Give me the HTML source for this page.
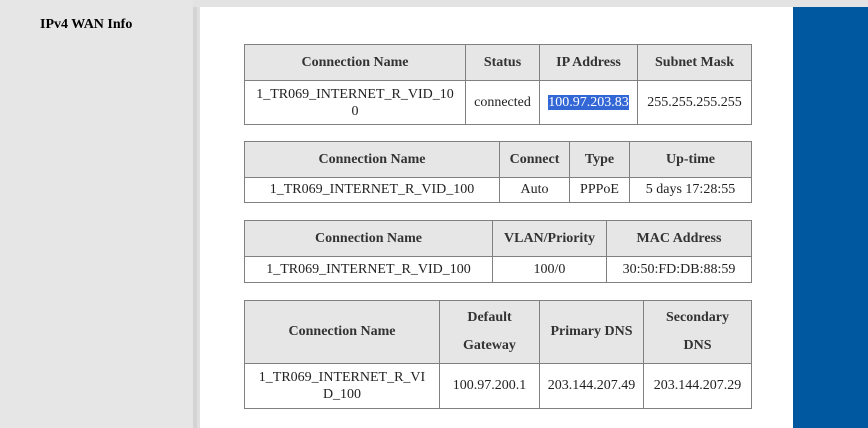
<!DOCTYPE html>
<html><head><style>
body{margin:0;width:868px;height:428px;overflow:hidden;background:#e6e6e6;font-family:"Liberation Serif","Times New Roman",Times,"DejaVu Serif",serif;position:relative}
.side{position:absolute;left:0;top:0;width:193px;height:428px;background:#e6e6e6}
.sep1{position:absolute;left:193px;top:0;width:4px;height:428px;background:#d4d4d4}
.sep2{position:absolute;left:197px;top:0;width:3px;height:428px;background:#e0e0e0}
.topb{position:absolute;left:193px;top:0;width:675px;height:7px;background:#e3e3e3}
.main{position:absolute;left:200px;top:7px;width:593px;height:421px;background:#fff}
.blue{position:absolute;left:793px;top:7px;width:75px;height:421px;background:#0059a0}
.title{position:absolute;left:40px;top:17px;font-weight:bold;font-size:14px;color:#000}
table{position:absolute;left:244px;border-collapse:collapse;table-layout:fixed;font-size:14px;color:#222;font-family:inherit}
td,th{border:1px solid #808080;text-align:center;padding:0 3px;line-height:24px}
th{background:#e6e6e6;font-weight:bold;color:#333}
.sel{background:#3367d6;color:#fff}
</style></head><body>
<div class="side"></div><div class="sep1"></div><div class="sep2"></div><div class="topb"></div>
<div class="main"></div><div class="blue"></div>
<div class="title">IPv4 WAN Info</div>

<table style="top:44px;width:507px">
<colgroup><col style="width:221px"><col style="width:74px"><col style="width:98px"><col style="width:114px"></colgroup>
<tr style="height:36px"><th>Connection Name</th><th>Status</th><th>IP Address</th><th>Subnet Mask</th></tr>
<tr style="height:44px"><td style="line-height:17px">1_TR069_INTERNET_R_VID_10<br>0</td><td>connected</td><td><span class="sel">100.97.203.83</span></td><td>255.255.255.255</td></tr>
</table>

<table style="top:141px;width:507px">
<colgroup><col style="width:255px"><col style="width:70px"><col style="width:60px"><col style="width:122px"></colgroup>
<tr style="height:36px"><th>Connection Name</th><th>Connect</th><th>Type</th><th>Up-time</th></tr>
<tr style="height:25px"><td>1_TR069_INTERNET_R_VID_100</td><td>Auto</td><td>PPPoE</td><td>5 days 17:28:55</td></tr>
</table>

<table style="top:220px;width:507px">
<colgroup><col style="width:248px"><col style="width:114px"><col style="width:145px"></colgroup>
<tr style="height:36px"><th>Connection Name</th><th>VLAN/Priority</th><th>MAC Address</th></tr>
<tr style="height:26px"><td>1_TR069_INTERNET_R_VID_100</td><td>100/0</td><td>30:50:FD:DB:88:59</td></tr>
</table>

<table style="top:300px;width:507px">
<colgroup><col style="width:195px"><col style="width:100px"><col style="width:104px"><col style="width:108px"></colgroup>
<tr style="height:63px"><th>Connection Name</th><th style="line-height:28px">Default<br>Gateway</th><th>Primary DNS</th><th style="line-height:28px">Secondary<br>DNS</th></tr>
<tr style="height:45px"><td style="line-height:17px">1_TR069_INTERNET_R_VI<br>D_100</td><td>100.97.200.1</td><td style="padding:0">203.144.207.49</td><td style="padding:0">203.144.207.29</td></tr>
</table>
</body></html>
